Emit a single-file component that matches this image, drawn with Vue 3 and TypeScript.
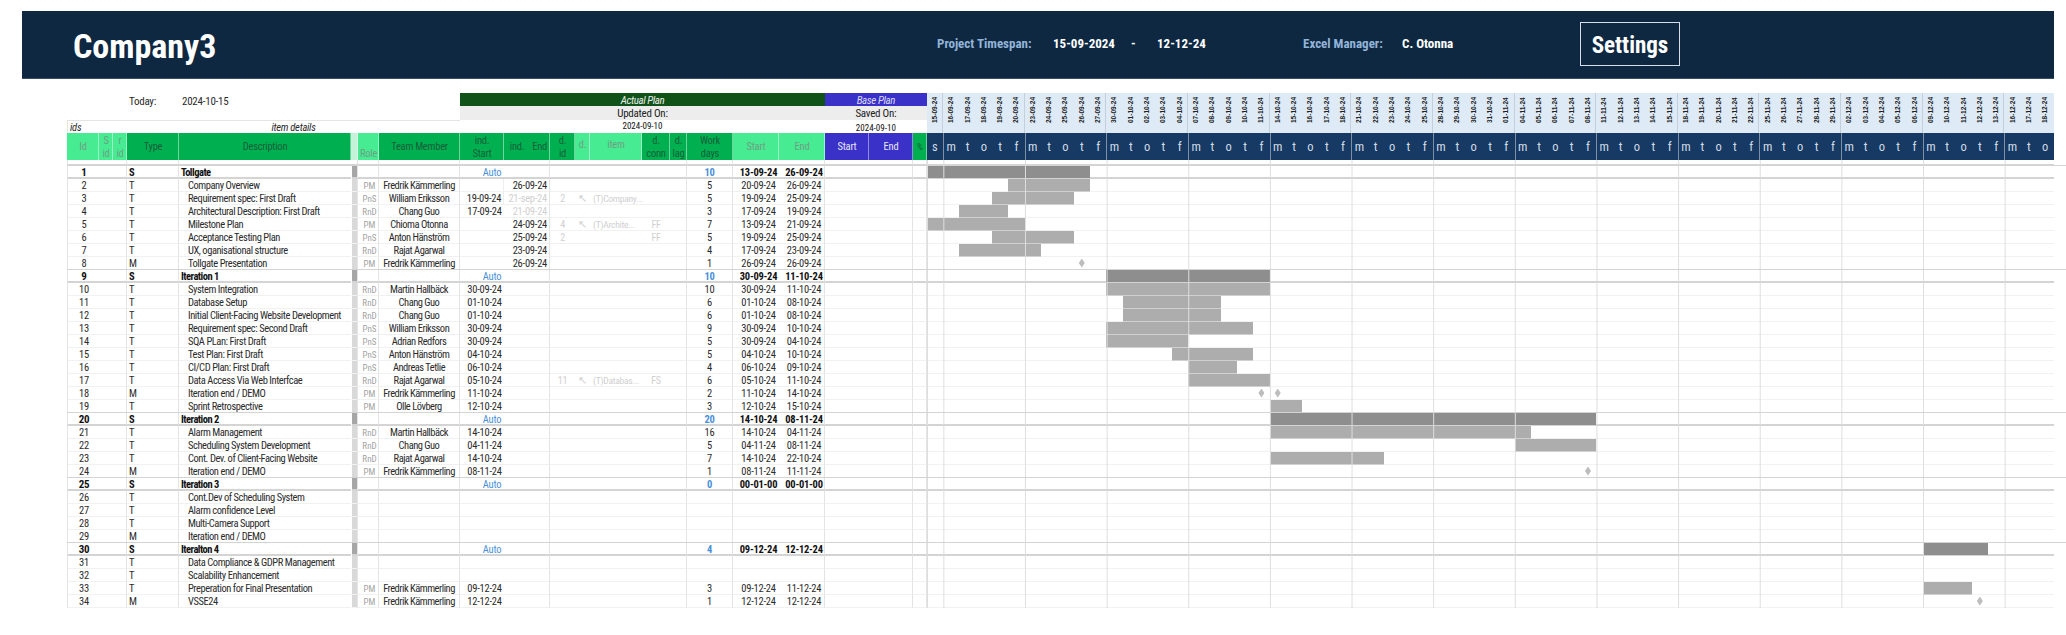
<script setup lang="ts">
interface Row {
  id: number; type: string; desc: string; role?: string; team?: string;
  is?: string; ie?: string; ieGrey?: boolean; did?: string; arrow?: boolean; item?: string; conn?: string;
  work?: string; start?: string; end?: string; bar?: [number, number]; ms?: number[];
}
const FK = 'Fredrik Kämmerling';
const rows: Row[] = [
  { id: 1, type: 'S', desc: 'Tollgate', is: 'Auto', work: '10', start: '13-09-24', end: '26-09-24', bar: [0, 9] },
  { id: 2, type: 'T', desc: 'Company Overview', role: 'PM', team: FK, ie: '26-09-24', work: '5', start: '20-09-24', end: '26-09-24', bar: [5, 9] },
  { id: 3, type: 'T', desc: 'Requirement spec: First Draft', role: 'PnS', team: 'William Eriksson', is: '19-09-24', ie: '21-sep-24', ieGrey: true, did: '2', arrow: true, item: '(T)Company...', work: '5', start: '19-09-24', end: '25-09-24', bar: [4, 8] },
  { id: 4, type: 'T', desc: 'Architectural Description: First Draft', role: 'RnD', team: 'Chang Guo', is: '17-09-24', ie: '21-09-24', ieGrey: true, work: '3', start: '17-09-24', end: '19-09-24', bar: [2, 4] },
  { id: 5, type: 'T', desc: 'Milestone Plan', role: 'PM', team: 'Chioma Otonna', ie: '24-09-24', did: '4', arrow: true, item: '(T)Archite...', conn: 'FF', work: '7', start: '13-09-24', end: '21-09-24', bar: [0, 5] },
  { id: 6, type: 'T', desc: 'Acceptance Testing Plan', role: 'PnS', team: 'Anton Hänström', ie: '25-09-24', did: '2', conn: 'FF', work: '5', start: '19-09-24', end: '25-09-24', bar: [4, 8] },
  { id: 7, type: 'T', desc: 'UX, oganisational structure', role: 'RnD', team: 'Rajat Agarwal', ie: '23-09-24', work: '4', start: '17-09-24', end: '23-09-24', bar: [2, 6] },
  { id: 8, type: 'M', desc: 'Tollgate Presentation', role: 'PM', team: FK, ie: '26-09-24', work: '1', start: '26-09-24', end: '26-09-24', ms: [9] },
  { id: 9, type: 'S', desc: 'Iteration 1', is: 'Auto', work: '10', start: '30-09-24', end: '11-10-24', bar: [11, 20] },
  { id: 10, type: 'T', desc: 'System Integration', role: 'RnD', team: 'Martin Hallbäck', is: '30-09-24', work: '10', start: '30-09-24', end: '11-10-24', bar: [11, 20] },
  { id: 11, type: 'T', desc: 'Database Setup', role: 'RnD', team: 'Chang Guo', is: '01-10-24', work: '6', start: '01-10-24', end: '08-10-24', bar: [12, 17] },
  { id: 12, type: 'T', desc: 'Initial Client-Facing Website Development', role: 'RnD', team: 'Chang Guo', is: '01-10-24', work: '6', start: '01-10-24', end: '08-10-24', bar: [12, 17] },
  { id: 13, type: 'T', desc: 'Requirement spec: Second Draft', role: 'PnS', team: 'William Eriksson', is: '30-09-24', work: '9', start: '30-09-24', end: '10-10-24', bar: [11, 19] },
  { id: 14, type: 'T', desc: 'SQA PLan: First Draft', role: 'PnS', team: 'Adrian Redfors', is: '30-09-24', work: '5', start: '30-09-24', end: '04-10-24', bar: [11, 15] },
  { id: 15, type: 'T', desc: 'Test Plan: First Draft', role: 'PnS', team: 'Anton Hänström', is: '04-10-24', work: '5', start: '04-10-24', end: '10-10-24', bar: [15, 19] },
  { id: 16, type: 'T', desc: 'CI/CD Plan: First Draft', role: 'PnS', team: 'Andreas Tetlie', is: '06-10-24', work: '4', start: '06-10-24', end: '09-10-24', bar: [16, 18] },
  { id: 17, type: 'T', desc: 'Data Access Via Web Interfcae', role: 'RnD', team: 'Rajat Agarwal', is: '05-10-24', did: '11', arrow: true, item: '(T)Databas...', conn: 'FS', work: '6', start: '05-10-24', end: '11-10-24', bar: [16, 20] },
  { id: 18, type: 'M', desc: 'Iteration end / DEMO', role: 'PM', team: FK, is: '11-10-24', work: '2', start: '11-10-24', end: '14-10-24', ms: [20, 21] },
  { id: 19, type: 'T', desc: 'Sprint Retrospective', role: 'PM', team: 'Olle Lövberg', is: '12-10-24', work: '3', start: '12-10-24', end: '15-10-24', bar: [21, 22] },
  { id: 20, type: 'S', desc: 'Iteration 2', is: 'Auto', work: '20', start: '14-10-24', end: '08-11-24', bar: [21, 40] },
  { id: 21, type: 'T', desc: 'Alarm Management', role: 'RnD', team: 'Martin Hallbäck', is: '14-10-24', work: '16', start: '14-10-24', end: '04-11-24', bar: [21, 36] },
  { id: 22, type: 'T', desc: 'Scheduling System Development', role: 'RnD', team: 'Chang Guo', is: '04-11-24', work: '5', start: '04-11-24', end: '08-11-24', bar: [36, 40] },
  { id: 23, type: 'T', desc: 'Cont. Dev. of Client-Facing Website', role: 'RnD', team: 'Rajat Agarwal', is: '14-10-24', work: '7', start: '14-10-24', end: '22-10-24', bar: [21, 27] },
  { id: 24, type: 'M', desc: 'Iteration end / DEMO', role: 'PM', team: FK, is: '08-11-24', work: '1', start: '08-11-24', end: '11-11-24', ms: [40] },
  { id: 25, type: 'S', desc: 'Iteration 3', is: 'Auto', work: '0', start: '00-01-00', end: '00-01-00' },
  { id: 26, type: 'T', desc: 'Cont.Dev of Scheduling System' },
  { id: 27, type: 'T', desc: 'Alarm confidence Level' },
  { id: 28, type: 'T', desc: 'Multi-Camera Support' },
  { id: 29, type: 'M', desc: 'Iteration end / DEMO' },
  { id: 30, type: 'S', desc: 'Iteralton 4', is: 'Auto', work: '4', start: '09-12-24', end: '12-12-24', bar: [61, 64] },
  { id: 31, type: 'T', desc: 'Data Compliance & GDPR Management' },
  { id: 32, type: 'T', desc: 'Scalability Enhancement' },
  { id: 33, type: 'T', desc: 'Preperation for Final Presentation', role: 'PM', team: FK, is: '09-12-24', work: '3', start: '09-12-24', end: '11-12-24', bar: [61, 63] },
  { id: 34, type: 'M', desc: 'VSSE24', role: 'PM', team: FK, is: '12-12-24', work: '1', start: '12-12-24', end: '12-12-24', ms: [64] },
];

const pad = (n: number) => String(n).padStart(2, '0');
const days: { date: string; letter: string; week: boolean }[] = [];
const letters = ['m', 't', 'o', 't', 'f'];
days.push({ date: '15-09-24', letter: 's', week: false });
const cursor = new Date(Date.UTC(2024, 8, 16));
for (let w = 0; w < 14; w++) {
  const count = w === 13 ? 3 : 5;
  for (let d = 0; d < count; d++) {
    days.push({
      date: `${pad(cursor.getUTCDate())}-${pad(cursor.getUTCMonth() + 1)}-24`,
      letter: letters[d],
      week: d === 0,
    });
    cursor.setUTCDate(cursor.getUTCDate() + 1);
  }
  cursor.setUTCDate(cursor.getUTCDate() + 2);
}
const barPos = (b: [number, number]) => ({ gridColumn: `${b[0] + 1} / ${b[1] + 2}` });
const msPos = (c: number) => ({ gridColumn: `${c + 1}` });
</script>

<template>
  <div class="page">
    <header class="band">
      <h1 class="title">Company3</h1>
      <span class="lbl span-label">Project Timespan:</span>
      <span class="val v1">15-09-2024</span>
      <span class="val v2">-</span>
      <span class="val v3">12-12-24</span>
      <span class="lbl mgr-label">Excel Manager:</span>
      <span class="val v4">C. Otonna</span>
      <div class="settings"><span>Settings</span></div>
    </header>

    <section class="sheet">
      <div class="top grid">
        <div class="today">
          <span class="today-l">Today:</span>
          <span>2024-10-15</span>
        </div>
        <div class="ids-row">
          <i class="ids">ids</i>
          <i class="details">item details</i>
        </div>
        <div class="actual-h">Actual Plan</div>
        <div class="updated">Updated On:</div>
        <div class="adate">2024-09-10</div>
        <div class="base-h">Base Plan</div>
        <div class="saved">Saved On:</div>
        <div class="bdate">2024-09-10</div>
        <div class="dates">
          <div v-for="d in days" :key="d.date" class="date" :class="{ wk: d.week }"><span>{{ d.date }}</span></div>
        </div>
      </div>

      <div class="head grid">
        <div class="h lg ltxt">Id</div>
        <div class="h lg ltxt"><span>S</span><span>id</span></div>
        <div class="h lg ltxt"><span>r</span><span>id</span></div>
        <div class="h dg">Type</div>
        <div class="h dg">Description</div>
        <div class="h pale"></div>
        <div class="h lg ltxt role-h">Role</div>
        <div class="h dg">Team Member</div>
        <div class="h dg"><span>ind.</span><span>Start</span></div>
        <div class="h dg ind-end"><span>ind.</span><span>End</span></div>
        <div class="h dg"><span>d.</span><span>id</span></div>
        <div class="h lg ltxt raised">d.</div>
        <div class="h lg ltxt raised">item</div>
        <div class="h dg"><span>d.</span><span>conn</span></div>
        <div class="h dg"><span>d.</span><span>lag</span></div>
        <div class="h dg"><span>Work</span><span>days</span></div>
        <div class="h lg ltxt">Start</div>
        <div class="h lg ltxt">End</div>
        <div class="h blue">Start</div>
        <div class="h blue">End</div>
        <div class="h dg pct">%</div>
        <div class="weekdays">
          <div v-for="d in days" :key="d.date" class="wd" :class="{ wk: d.week }">{{ d.letter }}</div>
        </div>
      </div>

      <div class="spacer grid">
        <div v-for="n in 21" :key="n" class="c" :class="`k${n}`"></div>
        <div class="gantt"></div>
      </div>

      <div v-for="r in rows" :key="r.id" class="row grid" :class="{ sec: r.type === 'S' }">
        <div class="c k1 num">{{ r.id }}</div>
        <div class="c k2"></div>
        <div class="c k3"></div>
        <div class="c k4 typ">{{ r.type }}</div>
        <div class="c k5 desc">{{ r.desc }}</div>
        <div class="c k6 strip"></div>
        <div class="c k7 role">{{ r.role }}</div>
        <div class="c k8 team">{{ r.team }}</div>
        <div class="c k9 is" :class="{ auto: r.is === 'Auto', ruled: r.id === 2 || r.id === 3 }">{{ r.is }}</div>
        <div class="c k10 ie" :class="{ grey: r.ieGrey }">{{ r.ie }}</div>
        <div class="c k11 dep">{{ r.did }}</div>
        <div class="c k12 dep arr">{{ r.arrow ? '↖' : '' }}</div>
        <div class="c k13 dep itm">{{ r.item }}</div>
        <div class="c k14 dep">{{ r.conn }}</div>
        <div class="c k15"></div>
        <div class="c k16 work">{{ r.work }}</div>
        <div class="c k17 dt">{{ r.start }}</div>
        <div class="c k18 dt">{{ r.end }}</div>
        <div class="c k19"></div>
        <div class="c k20"></div>
        <div class="c k21"></div>
        <div class="gantt">
          <div v-if="r.bar" class="bar" :style="barPos(r.bar)"></div>
          <div v-for="m in r.ms ?? []" :key="m" class="ms" :style="msPos(m)"></div>
        </div>
      </div>
    </section>
  </div>
</template>

<style>
html, body { margin: 0; background: #fff; }
</style>

<style scoped>
.page {
  width: 2066px;
  height: 635px;
  overflow: hidden;
  padding-top: 11px;
  box-sizing: border-box;
  font-family: Roboto, sans-serif;
  font-stretch: 75%;
  font-size: 10.5px;
  letter-spacing: -0.25px;
  color: #2b2b2b;
}
.band {
  margin-left: 22px;
  width: 2032px;
  height: 68px;
  background: #0e2841;
  border-bottom: 1px solid #3a5068;
  box-sizing: border-box;
  display: flex;
  align-items: center;
  color: #fff;
  white-space: nowrap;
  letter-spacing: 0;
}
.title { margin: 3px 0 0 51px; width: 864px; font-size: 34px; font-weight: 700; }
.lbl, .val { font-size: 13px; font-weight: 700; margin-top: -2px; }
.lbl { color: #93b4d8; }
.span-label { width: 116px; }
.v1 { width: 78px; }
.v2 { width: 26px; }
.v3 { width: 146px; }
.mgr-label { width: 99px; }
.v4 { width: 178px; }
.settings {
  width: 100px;
  height: 44px;
  border: 1px solid #d6dde6;
  box-sizing: border-box;
  display: flex;
  align-items: center;
  justify-content: center;
  font-size: 23px;
  font-weight: 700;
  margin-top: -1px;
}
.settings span { margin-top: 2px; }

.sheet { margin: 14px 0 0 67px; }
.grid {
  display: grid;
  grid-template-columns: 32px 14px 14px 52px 172px 7px 21px 81px 44px 46px 25px 15px 52px 28px 17px 46px 46px 46px 44px 44px 13.7px 1127px;
}
.top { grid-template-rows: 13px 14px 13px; }
.today {
  grid-column: 1 / 9;
  grid-row: 1 / 3;
  display: flex;
  padding: 2px 0 0 62px;
  font-size: 11px;
  line-height: 14px;
}
.today-l { width: 53px; }
.ids-row {
  grid-column: 1 / 9;
  grid-row: 3;
  position: relative;
  border: 1px solid #e4e4e4;
  border-width: 1px 0 0 1px;
  line-height: 14px;
  display: flex;
  box-sizing: border-box;
}
.ids { width: 59px; padding-left: 2px; box-sizing: border-box; }
.details { flex: 1; text-align: center; }
.actual-h, .base-h { grid-row: 1; display: flex; align-items: center; justify-content: center; font-style: italic; font-size: 11px; letter-spacing: -0.4px; padding-top: 1px; box-sizing: border-box; }
.actual-h { grid-column: 9 / 19; background: #115219; color: #e8efe8; }
.base-h { grid-column: 19 / 22; background: #3a31c9; color: #d8d8f4; }
.updated, .saved {
  grid-row: 2;
  background: #ededed;
  display: flex;
  align-items: center;
  justify-content: center;
  font-size: 11px;
  color: #222;
}
.updated { grid-column: 9 / 19; }
.saved { grid-column: 19 / 22; }
.adate, .bdate { grid-row: 3; text-align: center; font-size: 9px; color: #111; line-height: 12px; letter-spacing: 0; }
.adate { grid-column: 9 / 19; }
.bdate { grid-column: 19 / 22; padding-top: 2px; }
.dates {
  grid-column: 22;
  grid-row: 1 / 4;
  display: grid;
  grid-template-columns: repeat(69, 16.33px);
  background: #deebf7;
  overflow: hidden;
}
.date { display: flex; justify-content: center; padding-top: 3px; }
.date.wk { box-shadow: -1px 0 0 #c4cfdb; }
.date span {
  writing-mode: vertical-rl;
  transform: rotate(180deg);
  font-family: "Liberation Sans", sans-serif;
  font-size: 6.5px;
  font-weight: 700;
  line-height: 8px;
  height: 27px;
  color: #222;
  letter-spacing: 0;
}

.head { height: 27px; }
.h {
  display: flex;
  flex-direction: column;
  align-items: center;
  justify-content: center;
  line-height: 13px;
  font-size: 10.5px;
  box-shadow: inset -1px 0 0 rgba(255, 255, 255, 0.45);
  white-space: nowrap;
}
.dg { background: #00b050; color: #15603a; }
.lg { background: #47ec92; }
.ltxt { color: #6e9e84; }
.pale { background: #c3f3d8; }
.role-h { justify-content: flex-end; }
.raised { padding-bottom: 4px; box-sizing: border-box; }
.ind-end { flex-direction: row; justify-content: flex-end; gap: 8px; padding-right: 3px; box-sizing: border-box; }
.blue { background: #3a31c9; color: #e6e6fa; }
.pct { font-size: 9.5px; }
.weekdays {
  display: grid;
  grid-template-columns: repeat(69, 16.33px);
  background: #163a63;
  overflow: hidden;
}
.wd { text-align: center; color: #d3dbe6; font-size: 12.5px; line-height: 28px; letter-spacing: 0; }
.wd.wk { box-shadow: inset 1px 0 0 #7f90a5; }

.spacer { height: 6px; }
.row { height: 13px; }
.c {
  border-bottom: 1px solid #f1f1f1;
  box-sizing: border-box;
  line-height: 14px;
  white-space: nowrap;
  height: 13px;
}
.spacer .c { height: 6px; }
.k1 { border-left: 1px solid #e4e4e4; }
.k3, .k4, .k6, .k7, .k8, .k10, .k15, .k16, .k18, .k20, .k21 { border-right: 1px solid #e4e4e4; }
.num { text-align: center; padding-left: 1px; }
.typ { padding-left: 2px; }
.desc { padding-left: 9px; letter-spacing: -0.45px; }
.strip { background: #d9d9d9; margin-left: 1px; }
.role { text-align: center; color: #a3a3a3; font-size: 9px; padding-left: 3px; letter-spacing: 0; }
.team { text-align: center; letter-spacing: -0.5px; }
.is { text-align: center; padding-left: 5px; }
.is.auto { color: #4a90d9; padding-left: 20px; }
.is.ruled { border-right: 1px solid #eee; }
.ie { text-align: right; padding-right: 2px; }
.ie.grey { color: #d0d0d0; }
.dep { color: #cfcfcf; text-align: center; font-size: 10px; }
.arr { font-size: 11px; }
.itm { text-align: left; padding-left: 3px; font-size: 9.5px; }
.work { text-align: center; }
.dt { text-align: center; padding-left: 5px; }

.gantt {
  position: relative;
  display: grid;
  grid-template-columns: repeat(69, 16.33px);
  grid-template-rows: 12px;
  height: 13px;
  box-sizing: border-box;
  border-bottom: 1px solid #f1f1f1;
}
.spacer .gantt { height: 6px; }
.gantt::after {
  content: "";
  position: absolute;
  inset: 0 0 -1px;
  pointer-events: none;
  background:
    linear-gradient(#dedede, #dedede) 0 0 / 1px 100% no-repeat,
    linear-gradient(to right, #dedede 1px, transparent 1px) 16.33px 0 / 81.65px 100% repeat-x;
}
.bar { grid-row: 1; background: #adadad; box-shadow: 0 1px 0 #d0d0d0; }
.ms {
  grid-row: 1;
  justify-self: center;
  align-self: center;
  width: 6px;
  height: 9px;
  background: #bdbdbd;
  clip-path: polygon(50% 0, 100% 50%, 50% 100%, 0 50%);
}

.sec { position: relative; z-index: 1; }
.sec .c, .sec .gantt { border-bottom: 2px solid #d4d4d4; border-top: 0; font-weight: 700; color: #111; }
.sec { box-shadow: 0 -1px 0 #d4d4d4; }
.sec .strip { background: #a6a6a6; }
.sec .bar { background: #8e8e8e; box-shadow: none; }
.sec .is.auto { color: #4a90d9; font-weight: 400; }
.sec .work { color: #4a90d9; }
.sec .desc { padding-left: 2px; letter-spacing: -0.5px; }
.sec .num { font-size: 11px; }
.spacer .gantt, .spacer .c { border-bottom: 2px solid #d4d4d4; }
</style>
